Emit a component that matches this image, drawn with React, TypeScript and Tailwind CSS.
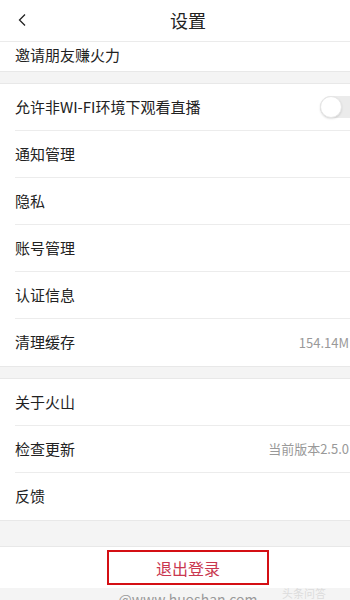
import React from "react";

type Row = { label: string; value?: string; toggle?: boolean };

const groupA: Row[] = [
  { label: "允许非WI-FI环境下观看直播", toggle: true },
  { label: "通知管理" },
  { label: "隐私" },
  { label: "账号管理" },
  { label: "认证信息" },
  { label: "清理缓存", value: "154.14M" },
];

const groupB: Row[] = [
  { label: "关于火山" },
  { label: "检查更新", value: "当前版本2.5.0" },
  { label: "反馈" },
];

function Toggle() {
  return (
    <div className="relative w-[44px] h-[22px] rounded-full bg-[#ebebeb]">
      <div className="absolute left-0 top-0 w-[22px] h-[22px] rounded-full bg-white border border-[#e6e6e6] shadow-[0_1px_2px_rgba(0,0,0,0.12)]" />
    </div>
  );
}

function Group({ rows }: { rows: Row[] }) {
  return (
    <div className="bg-white border-y border-[#e8e8e8]">
      {rows.map((r, i) => (
        <div key={r.label} className="pl-[15px]">
          <div
            className={
              "h-[47px] flex items-center justify-between pr-[27px] " +
              (i < rows.length - 1 ? "border-b border-[#ececec]" : "")
            }
          >
            <span className="text-[15px] text-[#222]">{r.label}</span>
            {r.value && <span className="text-[13px] text-[#999]">{r.value}</span>}
            {r.toggle && <div className="-mr-[15px]"><Toggle /></div>}
          </div>
        </div>
      ))}
    </div>
  );
}

export default function App() {
  return (
    <div
      className="w-[350px] h-[600px] overflow-hidden bg-[#f4f4f4]"
      style={{ fontFamily: '"Noto Sans CJK SC", "Noto Sans", sans-serif' }}
    >
      <div className="w-[376px]">
        {/* header */}
        <div className="h-[42px] bg-white border-b border-[#ebebeb] flex items-center relative">
          <svg className="absolute left-[17px] top-[13px]" width="10" height="14" viewBox="0 0 10 14" fill="none">
            <path d="M8 1.5 2.5 7 8 12.5" stroke="#222" strokeWidth="1.3" />
          </svg>
          <span className="w-full text-center text-[18px] text-[#222]">设置</span>
        </div>

        <div className="bg-white h-[30px] flex items-center pl-[15px] border-b border-[#e8e8e8]">
          <span className="text-[15px] text-[#222] -mt-[2px]">邀请朋友赚火力</span>
        </div>

        <div className="h-[11px]" />
        <Group rows={groupA} />
        <div className="h-[11px]" />
        <Group rows={groupB} />
        <div className="h-[25px]" />

        <div className="bg-white h-[42px] flex items-center justify-center border-t border-[#e8e8e8]">
          <div className="w-[162px] h-[35px] border-2 border-[#d40f14] flex items-center justify-center">
            <span className="text-[16px] text-[#c9374f]">退出登录</span>
          </div>
        </div>

        <div className="relative h-[20px] flex justify-center">
          <span className="text-[14px] text-[#9a9a9a] leading-none mt-[4px]">@www.huoshan.com</span>
          <span className="absolute left-[282px] top-[-3px] text-[11px] text-[#dcdcdc]">头条问答</span>
        </div>
      </div>
    </div>
  );
}
